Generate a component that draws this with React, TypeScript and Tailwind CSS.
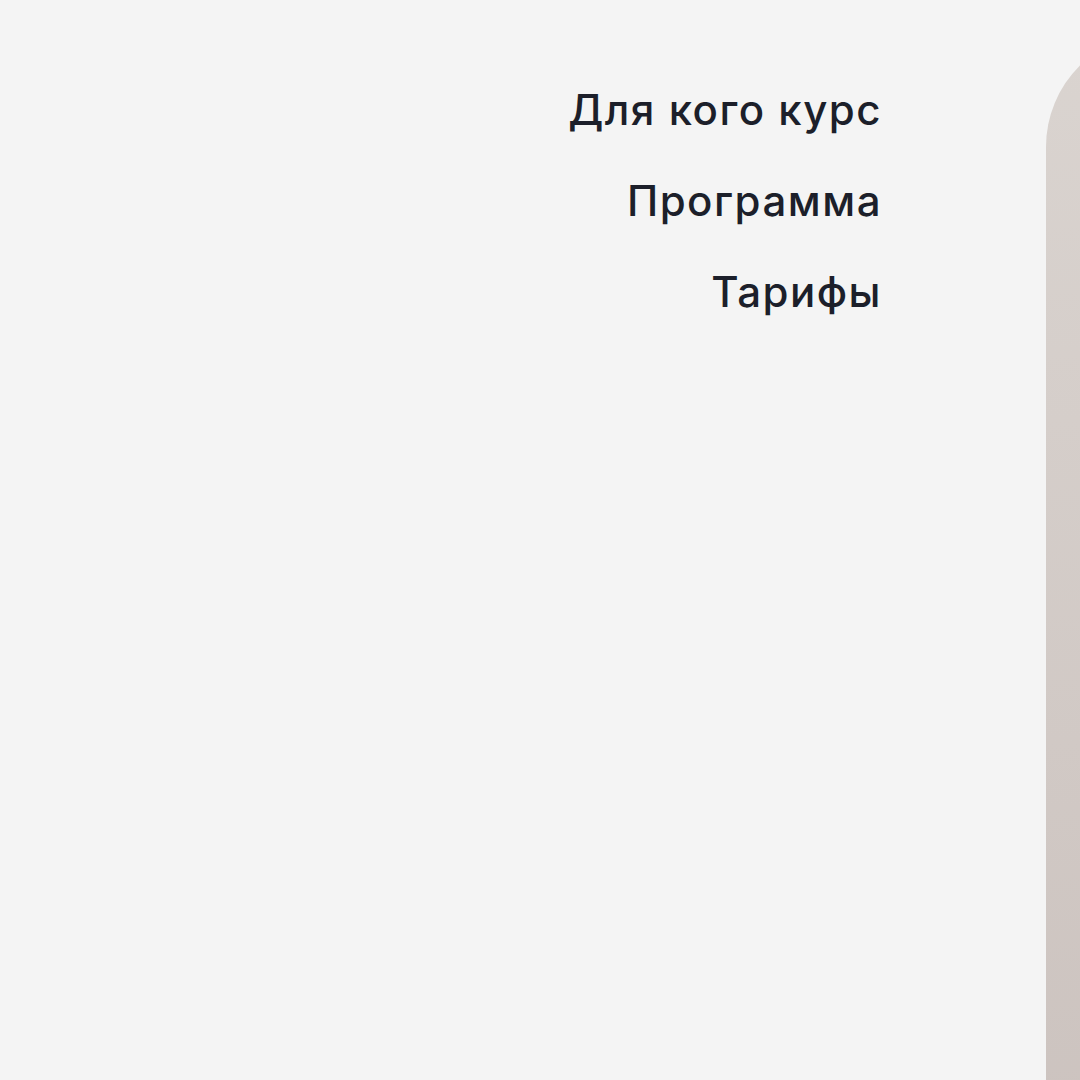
export default function App() {
  const links = ['Для кого курс', 'Программа', 'Тарифы'];

  return (
    <div className="flex h-[1080px] w-[1080px] overflow-hidden bg-[#f4f4f4]" style={{ fontFamily: 'Inter, "Noto Sans", sans-serif' }}>
      <nav className="flex w-[882px] shrink-0 flex-col items-end gap-[43px] pt-[86px]">
        {links.map((link) => (
          <a key={link} href="#" className="text-[42px] font-medium leading-[48px] tracking-[1.5px] text-[#1c1f2a]">
            {link}
          </a>
        ))}
      </nav>
      <div className="ml-[164px] mt-[32px] h-[1100px] w-[300px] shrink-0 rounded-tl-[115px] bg-gradient-to-b from-[#dad4d0] to-[#ccc3bf]" />
    </div>
  );
}
